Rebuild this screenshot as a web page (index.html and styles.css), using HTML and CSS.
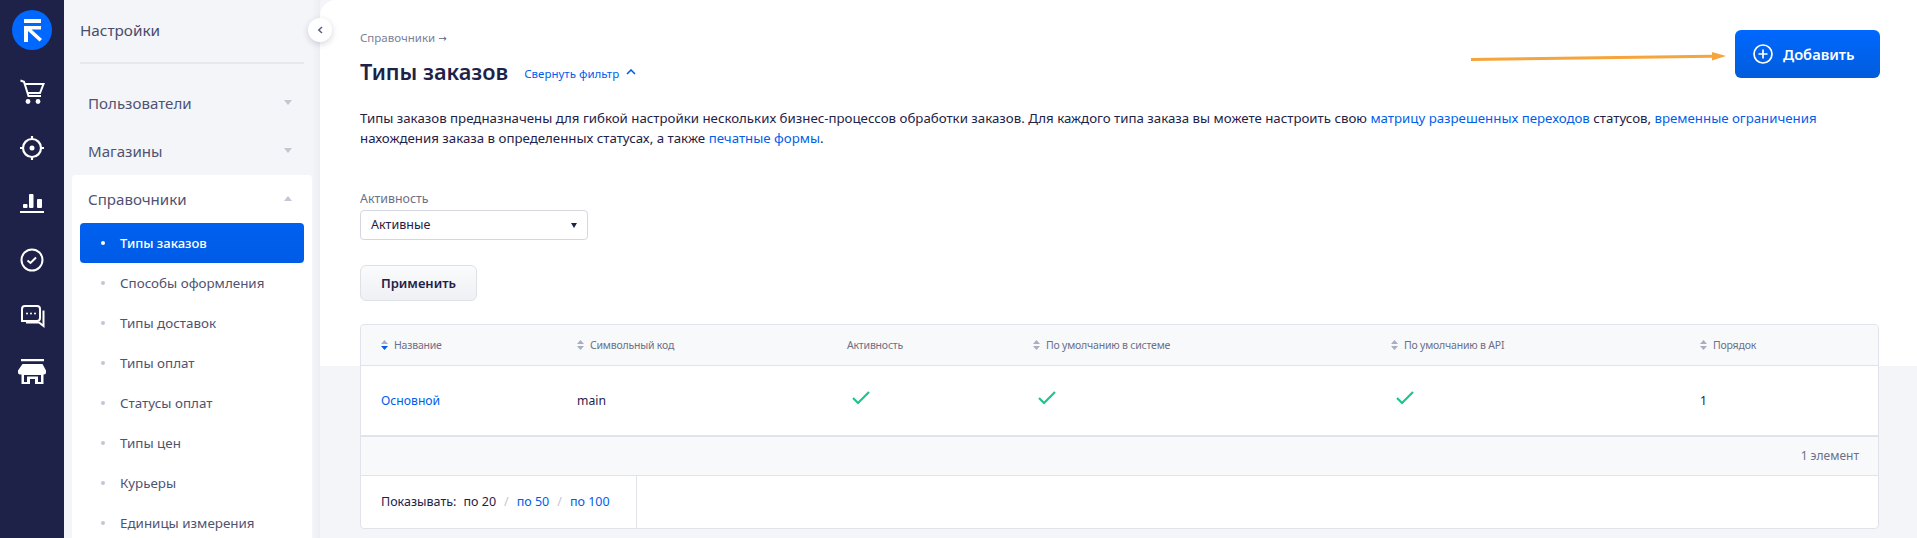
FILE: index.html
```html
<!DOCTYPE html>
<html lang="ru">
<head>
<meta charset="utf-8">
<title>Типы заказов</title>
<link rel="stylesheet" href="styles.css">
</head>
<body>
<div class="app">
  <nav class="rail">
    <svg class="logo" width="40" height="40" viewBox="0 0 40 40"><circle cx="20" cy="20" r="20" fill="#0068ff"/><path d="M12 9h17v4H12zM12 16h17v3.500H19.500L30 29l-2.500 2.500L16 21v11h-4z" fill="#fff"/></svg>
    <svg class="ri" width="28" height="28" viewBox="0 0 28 28" fill="none" stroke="#fff" stroke-width="2"><path d="M2.500 2.500l3.500 1.200L10.500 18H23"/><path d="M6.500 6H25.500L22 15H9.500"/><circle cx="10" cy="23.500" r="2.400" fill="#fff" stroke="none"/><circle cx="20" cy="23.500" r="2.400" fill="#fff" stroke="none"/></svg>
    <svg class="ri" width="28" height="28" viewBox="0 0 28 28" fill="none" stroke="#fff" stroke-width="2.200"><circle cx="14" cy="14" r="9"/><circle cx="14" cy="14" r="2.500" fill="#fff" stroke="none"/><path d="M14 2v3.500M14 22.500v3.500M2 14h3.500M22.500 14h3.500"/></svg>
    <svg class="ri" width="28" height="28" viewBox="0 0 28 28" fill="#fff"><rect x="2" y="21" width="24" height="2"/><rect x="5" y="14" width="4.500" height="4" rx="1"/><rect x="11" y="4" width="4.500" height="14" rx="1"/><rect x="19" y="9" width="5" height="9" rx="1"/></svg>
    <svg class="ri" width="28" height="28" viewBox="0 0 28 28" fill="none" stroke="#fff" stroke-width="2"><circle cx="14" cy="14" r="10.500"/><path d="M9.500 14.500l3 2.500 5.500-5.500"/></svg>
    <svg class="ri" width="28" height="28" viewBox="0 0 28 28" fill="none" stroke="#fff" stroke-width="2"><path d="M7 4h12a3 3 0 0 1 3 3v9a3 3 0 0 1-3 3H4V7a3 3 0 0 1 3-3z"/><path d="M25.500 8.500V24l-4.500-3.500H8"/><circle cx="9" cy="11.500" r="1" fill="#fff" stroke="none"/><circle cx="13" cy="11.500" r="1" fill="#fff" stroke="none"/><circle cx="17" cy="11.500" r="1" fill="#fff" stroke="none"/></svg>
    <svg class="ri" width="28" height="28" viewBox="0 0 28 28"><path d="M3 1h23v2.300H3zM4.500 6h20l3.500 6.500v2a2 2 0 0 1-2 2H25.500v9.500H3.500V16.500H2a2 2 0 0 1-2-2v-2z" fill="#fff"/><path d="M6 17h17v7h-3v-5.500H9V24H6z" fill="#1e2248"/><path d="M12 21h5v5h-5z" fill="#1e2248"/></svg>
  </nav>
  <aside class="panel">
    <div class="panel-title">Настройки</div>
    <div class="group">Пользователи<i class="tri"></i></div>
    <div class="group">Магазины<i class="tri"></i></div>
    <div class="card">
      <div class="group">Справочники<i class="tri up"></i></div>
      <ul class="items">
        <li class="active">Типы заказов</li>
        <li>Способы оформления</li>
        <li>Типы доставок</li>
        <li>Типы оплат</li>
        <li>Статусы оплат</li>
        <li>Типы цен</li>
        <li>Курьеры</li>
        <li>Единицы измерения</li>
      </ul>
    </div>
  </aside>
  <main class="main">
    <button class="toggle"><svg width="6" height="8" viewBox="0 0 6 8" fill="none" stroke="#5a607f" stroke-width="1.500"><path d="M5 1L1.800 4 5 7"/></svg></button>
    <div class="head">
      <div>
        <div class="crumb">Справочники <span class="crumb-arrow">→</span></div>
        <div class="title-row">
          <h1>Типы заказов</h1>
          <a class="collapse">Свернуть фильтр</a>
          <svg width="10" height="6" viewBox="0 0 10 6" fill="none" stroke="#005eeb" stroke-width="1.600"><path d="M1 5l4-4 4 4"/></svg>
        </div>
      </div>
      <div class="add-wrap">
        <svg class="arrow" width="256" height="12" viewBox="0 0 256 12"><path d="M1 8L242 4.800V2l14 4-14 4.500V7.800L1 11z" fill="#f5a53c"/></svg>
        <button class="add"><svg width="20" height="20" viewBox="0 0 20 20" fill="none" stroke="#fff" stroke-width="1.700"><circle cx="10" cy="10" r="9"/><path d="M10 5.500v9M5.500 10h9"/></svg>Добавить</button>
      </div>
    </div>
    <p class="desc">Типы заказов предназначены для гибкой настройки нескольких бизнес-процессов обработки заказов. Для каждого типа заказа вы можете настроить свою <a>матрицу разрешенных переходов</a> статусов, <a>временные ограничения</a> нахождения заказа в определенных статусах, а также <a>печатные формы</a>.</p>
    <label class="lbl">Активность</label>
    <div class="select">Активные<i class="caret"></i></div>
    <button class="apply">Применить</button>
    <div class="table">
      <div class="row th">
        <div><i class="sort on"></i>Название</div>
        <div><i class="sort"></i>Символьный код</div>
        <div>Активность</div>
        <div><i class="sort"></i>По умолчанию в системе</div>
        <div><i class="sort"></i>По умолчанию в API</div>
        <div><i class="sort"></i>Порядок</div>
      </div>
      <div class="row td">
        <div><a>Основной</a></div>
        <div>main</div>
        <div><svg class="check" width="18" height="14" viewBox="0 0 18 14" fill="none" stroke="#1fc48a" stroke-width="2.200"><path d="M1 7l5 5L17 1"/></svg></div>
        <div><svg class="check" width="18" height="14" viewBox="0 0 18 14" fill="none" stroke="#1fc48a" stroke-width="2.200"><path d="M1 7l5 5L17 1"/></svg></div>
        <div><svg class="check" width="18" height="14" viewBox="0 0 18 14" fill="none" stroke="#1fc48a" stroke-width="2.200"><path d="M1 7l5 5L17 1"/></svg></div>
        <div>1</div>
      </div>
      <div class="count">1 элемент</div>
      <div class="foot">
        <div class="pager">Показывать: <span class="cur">по 20</span><span class="sl">/</span><a>по 50</a><span class="sl">/</span><a>по 100</a></div>
      </div>
    </div>
  </main>
</div>
</body>
</html>
```
FILE: styles.css
```css
* { box-sizing: border-box; }
html, body { margin: 0; height: 100%; overflow: hidden; }
body { font-family: "Noto Sans", "Open Sans", sans-serif; font-size: 14px; color: #1e2248; background: #f4f5f8; }
a { color: #005eeb; text-decoration: none; }
.app { display: flex; height: 538px; overflow: hidden; }

.rail { width: 64px; flex: none; background: #1e2248; display: flex; flex-direction: column; align-items: center; padding-top: 10px; }
.logo { margin-bottom: 28px; flex: none; }
.ri { margin-bottom: 28px; flex: none; }

.panel { width: 256px; flex: none; background: linear-gradient(90deg, #f4f5f8 248px, #eceef3 256px); padding: 0 8px; }
.panel-title { margin: 0 8px; height: 64px; border-bottom: 2px solid #e6e8ee; font-size: 15.300px; line-height: 61px; color: #484c6b; }
.group { position: relative; height: 48px; line-height: 48px; padding-left: 16px; font-size: 15.100px; color: #4f5372; }
.panel > .group:nth-child(2) { margin-top: 15px; }
.tri { position: absolute; right: 20px; top: 21px; border: 4.500px solid transparent; border-top: 5.500px solid #c3c6d3; }
.tri.up { top: 21px; border-top: 0; border-bottom: 5.500px solid #c3c6d3; }
.card { background: #fff; border-radius: 4px 4px 0 0; width: 240px; height: 400px; }
.items { list-style: none; margin: 0 8px; padding: 0; }
.items li { position: relative; height: 40px; line-height: 40px; padding-left: 40px; font-size: 13.400px; color: #4f5372; }
.items li::before { content: ""; position: absolute; left: 21px; top: 18px; width: 4px; height: 4px; border-radius: 50%; background: #c3c6d3; }
.items li.active { background: linear-gradient(#0060f0, #005ce6); color: #fff; border-radius: 4px; font-weight: 500; font-size: 13px; }
.items li.active::before { background: #fff; }

.main { position: relative; flex: 1; min-width: 0; padding: 0 37px 0 40px; border-radius: 16px 0 0 0; background: linear-gradient(#fff 366px, #f4f5f8 366px); }
.toggle { position: absolute; left: -12px; top: 18px; width: 24px; height: 24px; border: 0; padding: 0; border-radius: 50%; background: #fff; box-shadow: 0 2px 6px rgba(30,34,72,.18); display: flex; align-items: center; justify-content: center; }

.head { display: flex; justify-content: space-between; padding-top: 30px; height: 101px; }
.crumb { font-size: 11.500px; line-height: 16px; color: #7a7f98; }
.crumb-arrow { font-family: "DejaVu Sans", sans-serif; font-size: 10px; color: #5f6480; }
.title-row { display: flex; align-items: center; margin-top: 7px; height: 36px; }
h1 { margin: 0; font-size: 21.700px; font-weight: 600; line-height: 36px; color: #1e2248; }
.collapse { margin-left: 16px; margin-top: 2px; font-size: 11.500px; margin-right: 7px; }
.add-wrap { display: flex; align-items: flex-start; gap: 9px; }
.arrow { margin-top: 20px; }
.add { width: 145px; height: 48px; border: 0; border-radius: 6px; background: linear-gradient(#0068ff, #005cdc); color: #fff; font: 600 14.700px "Noto Sans", sans-serif; display: flex; align-items: center; padding: 0 0 0 18px; gap: 10px; }

.desc { margin: 7px 0 0; width: 1520px; font-size: 13.270px; line-height: 20px; color: #1e2248; }
.lbl { display: block; margin-top: 42px; font-size: 12.400px; line-height: 18px; color: #6b7089; }
.select { position: relative; margin-top: 2px; width: 228px; height: 30px; border: 1px solid #d5d7e0; border-radius: 4px; line-height: 28px; padding-left: 10px; font-size: 12.500px; background: #fff; }
.caret { position: absolute; right: 10px; top: 12px; border: 3.500px solid transparent; border-top: 5px solid #1e2248; }
.apply { display: block; margin-top: 25px; width: 117px; height: 36px; border: 1px solid #dfe1e8; border-radius: 6px; background: linear-gradient(#fafbfc, #eef0f4); color: #1e2248; font: 600 13px "Noto Sans", sans-serif; }

.table { margin-top: 23px; width: 1519px; height: 205px; border: 1px solid #e1e3ea; border-radius: 4px; background: #fff; }
.row { display: grid; grid-template-columns: 196px 270px 186px 358px 309px 1fr; padding-left: 20px; align-items: center; }
.th { height: 41px; background: #f8f9fb; border-bottom: 1px solid #e1e3ea; font-size: 10.500px; letter-spacing: -.2px; color: #6b7089; border-radius: 4px 4px 0 0; }
.td { height: 71px; border-bottom: 2px solid #e1e3ea; font-size: 12.200px; color: #1e2248; }
.sort { display: inline-block; width: 7px; height: 10px; margin-right: 6px; vertical-align: -1px; background: #a9adbd; clip-path: polygon(50% 0, 100% 40%, 0 40%, 50% 0, 50% 60%, 100% 60%, 50% 100%, 0 60%, 50% 60%); }
.sort.on { background: linear-gradient(#a9adbd 50%, #005eeb 50%); }
.check { display: block; margin: -6px 0 0 5px; }
.count { height: 39px; line-height: 38px; background: #f8f9fb; border-bottom: 1px solid #e1e3ea; text-align: right; padding-right: 19px; font-size: 12px; color: #6b7089; }
.foot { height: 52px; }
.pager { width: 276px; height: 100%; border-right: 1px solid #e1e3ea; padding-left: 20px; line-height: 52px; font-size: 12.500px; }
.cur { margin-left: 4px; }
.sl { margin: 0 8px; color: #c3c6d3; }
```
